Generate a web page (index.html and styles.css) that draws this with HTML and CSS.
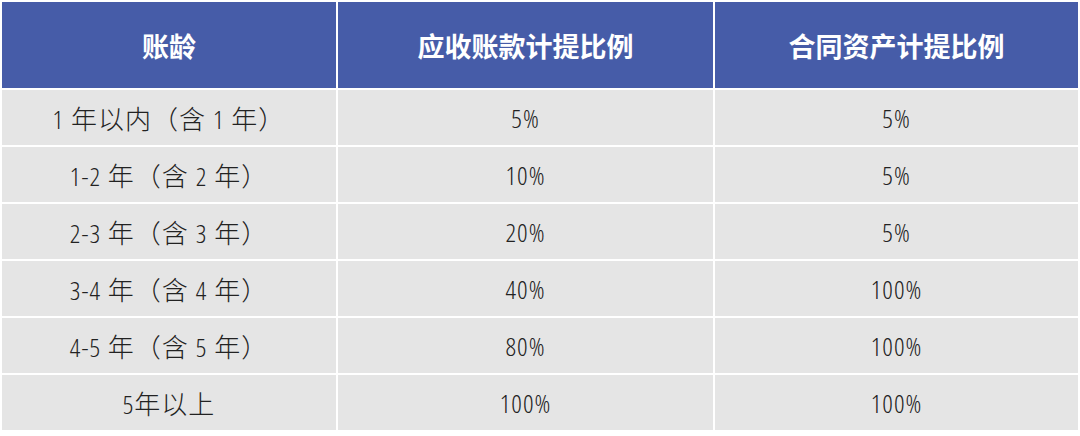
FILE: index.html
```html
<!DOCTYPE html>
<html lang="zh">
<head>
<meta charset="utf-8">
<link rel="stylesheet" href="styles.css">
</head>
<body>
<table class="grid">
  <colgroup>
    <col class="c1"><col class="c2"><col class="c3">
  </colgroup>
  <thead>
    <tr><th>账龄</th><th>应收账款计提比例</th><th>合同资产计提比例</th></tr>
  </thead>
  <tbody>
    <tr><td>1 年以内（含 1 年）</td><td>5%</td><td>5%</td></tr>
    <tr><td>1-2 年（含 2 年）</td><td>10%</td><td>5%</td></tr>
    <tr><td>2-3 年（含 3 年）</td><td>20%</td><td>5%</td></tr>
    <tr><td>3-4 年（含 4 年）</td><td>40%</td><td>100%</td></tr>
    <tr><td>4-5 年（含 5 年）</td><td>80%</td><td>100%</td></tr>
    <tr><td>5年以上</td><td>100%</td><td>100%</td></tr>
  </tbody>
</table>
</body>
</html>
```

FILE: styles.css
```css
html, body {
  margin: 0;
  padding: 0;
  background: #ffffff;
}
body {
  font-family: "Open Sans", "Noto Sans CJK SC", "Noto Sans", sans-serif;
}
.grid {
  border-collapse: collapse;
  width: 1078px;
  table-layout: fixed;
}
.c1 { width: 336px; }
.c2 { width: 377px; }
.c3 { width: 365px; }
.grid th,
.grid td {
  border: 2px solid #ffffff;
  text-align: center;
  vertical-align: middle;
  padding: 0;
}
.grid th {
  background: #465ca8;
  color: #ffffff;
  font-family: "Noto Sans CJK SC", sans-serif;
  font-weight: 700;
  font-size: 27px;
  height: 86px;
}
.grid td {
  background: #e5e5e5;
  color: #222222;
  font-size: 26px;
  font-weight: 300;
  font-stretch: 80%;
  letter-spacing: 1px;
  word-spacing: 1px;
  height: 55px;
}
```
